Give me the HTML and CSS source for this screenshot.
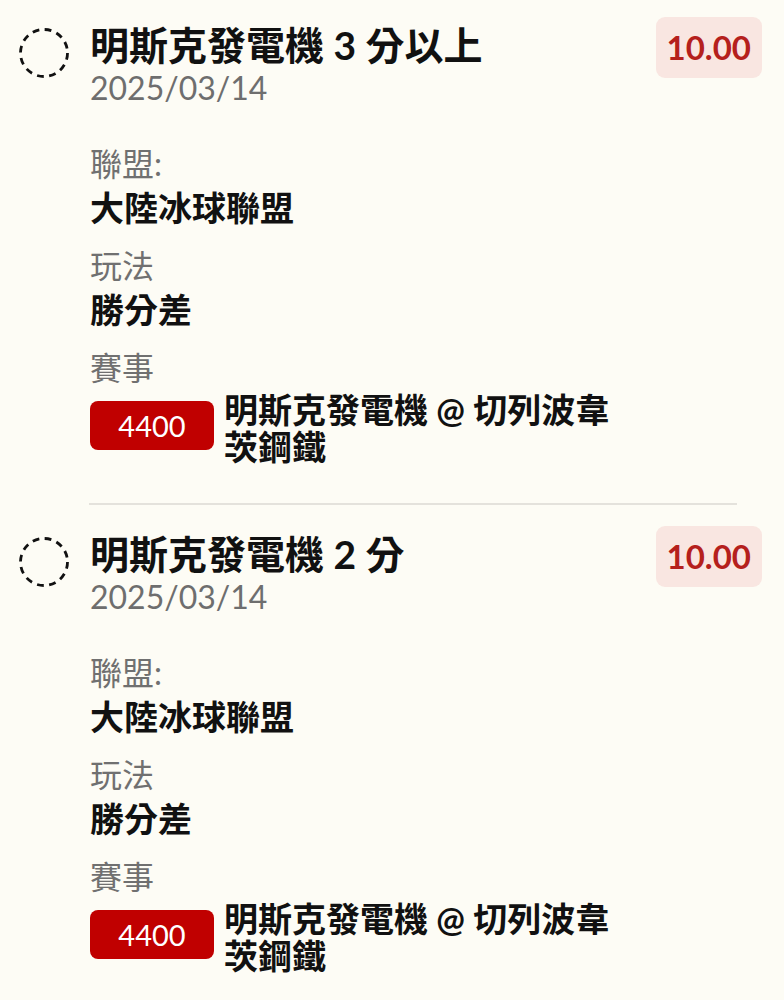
FILE: index.html
```html
<!DOCTYPE html>
<html>
<head>
    <title>投注記錄</title>
    <link rel="stylesheet" href="styles.css">
</head>
<body>
    <div class="list">
        <div class="bet">
            <svg class="check" width="50" height="50" viewBox="0 0 50 50">
                <circle cx="25" cy="25" r="23.5" fill="none" stroke="#111" stroke-width="2.8" stroke-dasharray="6.8 5.5"></circle>
            </svg>
            <div class="info">
                <div class="title">明斯克發電機 3 分以上</div>
                <div class="date">2025/03/14</div>
                <div class="field">
                    <div class="label">聯盟:</div>
                    <div class="value">大陸冰球聯盟</div>
                </div>
                <div class="field">
                    <div class="label">玩法</div>
                    <div class="value">勝分差</div>
                </div>
                <div class="field">
                    <div class="label">賽事</div>
                    <div class="match">
                        <span class="code">4400</span>
                        <span class="teams">明斯克發電機 @ 切列波韋茨鋼鐵</span>
                    </div>
                </div>
            </div>
            <div class="odds">10.00</div>
        </div>

        <div class="divider"></div>

        <div class="bet">
            <svg class="check" width="50" height="50" viewBox="0 0 50 50">
                <circle cx="25" cy="25" r="23.5" fill="none" stroke="#111" stroke-width="2.8" stroke-dasharray="6.8 5.5"></circle>
            </svg>
            <div class="info">
                <div class="title">明斯克發電機 2 分</div>
                <div class="date">2025/03/14</div>
                <div class="field">
                    <div class="label">聯盟:</div>
                    <div class="value">大陸冰球聯盟</div>
                </div>
                <div class="field">
                    <div class="label">玩法</div>
                    <div class="value">勝分差</div>
                </div>
                <div class="field">
                    <div class="label">賽事</div>
                    <div class="match">
                        <span class="code">4400</span>
                        <span class="teams">明斯克發電機 @ 切列波韋茨鋼鐵</span>
                    </div>
                </div>
            </div>
            <div class="odds">10.00</div>
        </div>

        <div class="divider"></div>
    </div>
</body>
</html>
```

FILE: styles.css
```css
body {
    margin: 0;
    background: #fdfcf5;
    color: #111;
    font-family: Lato, "Noto Sans CJK TC", sans-serif;
}
.list {
    padding-top: 17px;
}
.bet {
    display: flex;
    align-items: flex-start;
    padding: 0 22px 0 19px;
}
.check {
    flex: none;
    margin-top: 11px;
    margin-right: 21px;
}
.info {
    flex: 1;
    padding-top: 5px;
    margin-right: 20px;
}
.title {
    font-size: 39px;
    font-weight: 700;
    line-height: 46px;
}
.date {
    font-size: 32px;
    line-height: 40px;
    color: #6e6e6e;
    margin-bottom: 34px;
}
.field {
    margin-top: 14px;
}
.label {
    font-size: 32px;
    line-height: 44px;
    color: #707070;
}
.value {
    font-size: 34px;
    font-weight: 700;
    line-height: 44px;
}
.match {
    display: flex;
    align-items: flex-start;
    margin-top: 1px;
}
.code {
    flex: none;
    width: 124px;
    height: 49px;
    margin-top: 10px;
    margin-right: 10px;
    background: #c00000;
    color: #fff;
    border-radius: 8px;
    font-size: 29px;
    line-height: 49px;
    text-align: center;
}
.teams {
    font-size: 34px;
    font-weight: 700;
    line-height: 37px;
}
.odds {
    flex: none;
    padding: 10px 11px 11px;
    background: #f9e6e1;
    color: #b5201c;
    border-radius: 9px;
    font-size: 33px;
    font-weight: 700;
    line-height: 40px;
}
.divider {
    height: 2px;
    margin: 38px 47px 21px 89px;
    background: #e4e2dc;
}
```
